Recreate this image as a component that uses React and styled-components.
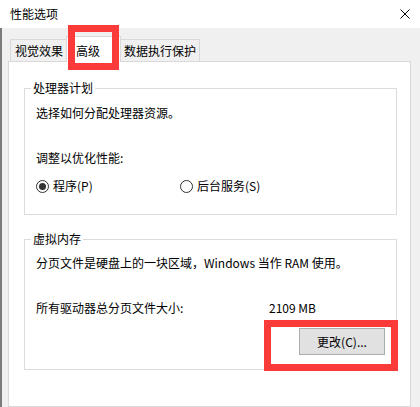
import React from 'react';
import styled, { createGlobalStyle } from 'styled-components';

const Global = createGlobalStyle`
  html, body { margin: 0; padding: 0; background: #fff; }
  body {
    width: 420px; height: 407px; overflow: hidden;
    font-family: "Noto Sans CJK SC", "Microsoft YaHei UI", sans-serif;
    font-size: 12px; color: #000;
  }
  * { box-sizing: border-box; }
`;

const Window = styled.div`
  width: 420px; height: 407px;
  display: flex; flex-direction: column;
  background: #fff;
`;

const TitleBar = styled.div`
  height: 28px; flex: none;
  display: flex; align-items: center; justify-content: space-between;
  padding: 0 10px;
  background: #fff;
`;

const Title = styled.span`
  line-height: 16px;
`;

const Body = styled.div`
  flex: 1; min-height: 0;
  display: flex; flex-direction: column;
  background: #f0f0f0;
  border-left: 2px solid #7b7b7b;
  padding: 0 9px 0 6px;
`;

const TabRow = styled.div`
  height: 33px; flex: none;
  display: flex; align-items: flex-end;
  padding-left: 2px;
`;

const Tab = styled.div`
  position: relative;
  width: ${p => (p.$active ? p.$w + 4 : p.$w)}px;
  height: ${p => (p.$active ? 26 : 22)}px;
  margin: ${p => (p.$active ? '0 -2px -1px -2px' : '0')};
  padding: ${p => (p.$active ? '6px 0 0 9px' : '3px 0 0 4px')};
  line-height: 16px;
  white-space: nowrap;
  background: ${p => (p.$active ? '#fff' : '#f0f0f0')};
  border: 1px solid #d9d9d9;
  border-bottom: ${p => (p.$active ? 'none' : '0')};
  z-index: ${p => (p.$active ? 1 : 0)};
`;

const Highlight = styled.span`
  position: absolute;
  top: ${p => p.$t}px; left: ${p => p.$l}px;
  right: ${p => p.$r}px; bottom: ${p => p.$b}px;
  border: 7px solid #fb3a3a;
  pointer-events: none;
  z-index: 2;
`;

const Panel = styled.div`
  flex: 1;
  display: flex; flex-direction: column;
  background: #fff;
  border: 1px solid #d9d9d9;
  padding: 26px 13px 0 15px;
`;

const Group = styled.div`
  display: flex; flex-direction: column;
  border: 1px solid #dcdcdc;
  padding: 0 11px ${p => p.$pb}px 11px;
  & + & { margin-top: 24px; }
`;

const Legend = styled.div`
  align-self: flex-start;
  height: 16px; line-height: 16px;
  margin: -9px 0 0 -5px;
  padding: 0 2px;
  background: #fff;
`;

const Line = styled.div`
  line-height: 16px;
  margin-top: ${p => p.$mt}px;
  white-space: nowrap;
`;

const Columns = styled.div`
  display: grid;
  grid-template-columns: ${p => p.$first}px auto;
  line-height: 16px;
  margin-top: ${p => p.$mt}px;
  white-space: nowrap;
`;

const Radio = styled.label`
  display: flex; align-items: center; gap: 4px;
`;

const RadioCircle = styled.span`
  width: 13px; height: 13px;
  border: 1px solid #333;
  border-radius: 50%;
  display: flex; align-items: center; justify-content: center;
  background: #fff;
  &::after {
    content: '';
    display: ${p => (p.$checked ? 'block' : 'none')};
    width: 7px; height: 7px;
    border-radius: 50%;
    background: #333;
  }
`;

const ButtonRow = styled.div`
  display: flex; justify-content: flex-end;
  margin-top: 12px;
`;

const Button = styled.button`
  position: relative;
  width: 86px; height: 27px;
  padding: 0;
  font: inherit; line-height: 16px; color: #000;
  background: #e1e1e1;
  border: 1px solid #adadad;
`;

const CloseIcon = () => (
  <svg width="10" height="10" viewBox="0 0 10 10">
    <path d="M0.5 0.5L9.5 9.5M9.5 0.5L0.5 9.5" stroke="#000" strokeWidth="1" fill="none" />
  </svg>
);

export default function App() {
  return (
    <>
      <Global />
      <Window>
        <TitleBar>
          <Title>性能选项</Title>
          <CloseIcon />
        </TitleBar>
        <Body>
          <TabRow>
            <Tab $w={58}>视觉效果</Tab>
            <Tab $w={51} $active>
              高级
              <Highlight $t={-12} $l={1} $r={1} $b={-8} />
            </Tab>
            <Tab $w={81}>数据执行保护</Tab>
          </TabRow>
          <Panel>
            <Group $pb={20}>
              <Legend>处理器计划</Legend>
              <Line $mt={9}>选择如何分配处理器资源。</Line>
              <Line $mt={29}>调整以优化性能:</Line>
              <Columns $first={144} $mt={12}>
                <Radio><RadioCircle $checked />程序(P)</Radio>
                <Radio><RadioCircle />后台服务(S)</Radio>
              </Columns>
            </Group>
            <Group $pb={14}>
              <Legend>虚拟内存</Legend>
              <Line $mt={8}>分页文件是硬盘上的一块区域，Windows 当作 RAM 使用。</Line>
              <Columns $first={233} $mt={29}>
                <span>所有驱动器总分页文件大小:</span>
                <span>2109 MB</span>
              </Columns>
              <ButtonRow>
                <Button>
                  更改(C)...
                  <Highlight $t={-9} $l={-36} $r={-14} $b={-17} />
                </Button>
              </ButtonRow>
            </Group>
          </Panel>
        </Body>
      </Window>
    </>
  );
}
